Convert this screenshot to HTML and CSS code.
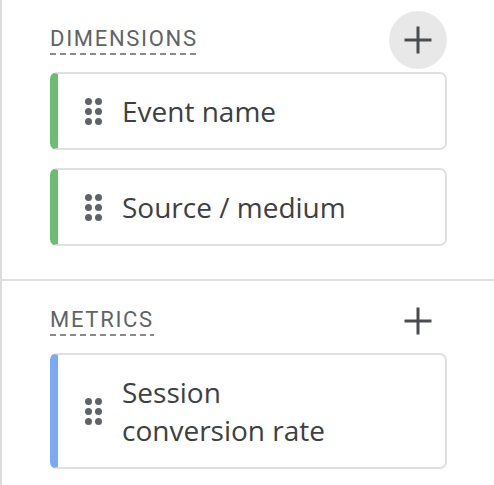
FILE: index.html
```html
<!DOCTYPE html>
<html lang="en">
<head>
    <meta charset="UTF-8">
    <meta name="viewport" content="width=device-width, initial-scale=1.0">
    <title>Variables</title>
    <link rel="stylesheet" href="styles.css">
</head>
<body>
    <div class="panel">
        <div class="section">
            <div class="section-head">
                <span class="section-title">DIMENSIONS</span>
                <button class="add-btn hovered" title="Add dimension">
                    <svg width="28" height="28" viewBox="0 0 28 28"><path d="M14 0.5v27M0.5 14h27" stroke="currentColor" stroke-width="3" fill="none"/></svg>
                </button>
            </div>
            <div class="chip chip-dimension">
                <svg class="drag" width="17" height="27" viewBox="0 0 17 27"><circle cx="3.5" cy="3.5" r="3.5"/><circle cx="13.5" cy="3.5" r="3.5"/><circle cx="3.5" cy="13.5" r="3.5"/><circle cx="13.5" cy="13.5" r="3.5"/><circle cx="3.5" cy="23.5" r="3.5"/><circle cx="13.5" cy="23.5" r="3.5"/></svg>
                <span class="chip-label">Event name</span>
            </div>
            <div class="chip chip-dimension">
                <svg class="drag" width="17" height="27" viewBox="0 0 17 27"><circle cx="3.5" cy="3.5" r="3.5"/><circle cx="13.5" cy="3.5" r="3.5"/><circle cx="3.5" cy="13.5" r="3.5"/><circle cx="13.5" cy="13.5" r="3.5"/><circle cx="3.5" cy="23.5" r="3.5"/><circle cx="13.5" cy="23.5" r="3.5"/></svg>
                <span class="chip-label">Source / medium</span>
            </div>
        </div>
        <div class="section">
            <div class="section-head">
                <span class="section-title">METRICS</span>
                <button class="add-btn" title="Add metric">
                    <svg width="28" height="28" viewBox="0 0 28 28"><path d="M14 0.5v27M0.5 14h27" stroke="currentColor" stroke-width="3" fill="none"/></svg>
                </button>
            </div>
            <div class="chip chip-metric">
                <svg class="drag" width="17" height="27" viewBox="0 0 17 27"><circle cx="3.5" cy="3.5" r="3.5"/><circle cx="13.5" cy="3.5" r="3.5"/><circle cx="3.5" cy="13.5" r="3.5"/><circle cx="13.5" cy="13.5" r="3.5"/><circle cx="3.5" cy="23.5" r="3.5"/><circle cx="13.5" cy="23.5" r="3.5"/></svg>
                <span class="chip-label">Session<br>conversion rate</span>
            </div>
        </div>
    </div>
</body>
</html>
```

FILE: styles.css
```css
body {
    margin: 0;
    padding: 0;
    background-color: #fff;
    font-family: "Open Sans", Arial, sans-serif;
}
.panel {
    min-height: 485px;
    border-left: 2px solid #dcdcdc;
}
.section {
    padding: 12px 47px 33px 48px;
    border-bottom: 2px solid #e0e0e0;
}
.section:last-child {
    border-bottom: none;
}
.section-head {
    display: flex;
    justify-content: space-between;
    align-items: center;
    height: 56px;
    margin-bottom: 4px;
}
.section-title {
    font-family: Roboto, Arial, sans-serif;
    font-size: 22px;
    line-height: 26px;
    letter-spacing: 1.7px;
    color: #5f6368;
    padding-bottom: 3px;
    background-image: repeating-linear-gradient(to right, #8a8a8a 0 6px, transparent 6px 10px);
    background-size: 100% 2px;
    background-position: left bottom;
    background-repeat: no-repeat;
}
.add-btn {
    width: 58px;
    height: 58px;
    border: none;
    border-radius: 50%;
    background-color: transparent;
    color: #4a4d50;
    display: flex;
    align-items: center;
    justify-content: center;
    padding: 0;
    cursor: pointer;
}
.add-btn.hovered {
    background-color: #e8e8e8;
}
.chip {
    display: flex;
    align-items: center;
    gap: 20px;
    padding: 18px 20px 18px 27px;
    border: 2px solid #e0e0e0;
    border-left-width: 8px;
    border-radius: 7px;
    margin-bottom: 18px;
}
.chip:last-child {
    margin-bottom: 0;
}
.chip-dimension {
    border-left-color: #6cbd6f;
}
.chip-metric {
    border-left-color: #7aa9f5;
}
.drag {
    fill: #5f6368;
    flex-shrink: 0;
}
.chip-label {
    font-size: 28px;
    line-height: 38px;
    color: #3c4043;
}
```
